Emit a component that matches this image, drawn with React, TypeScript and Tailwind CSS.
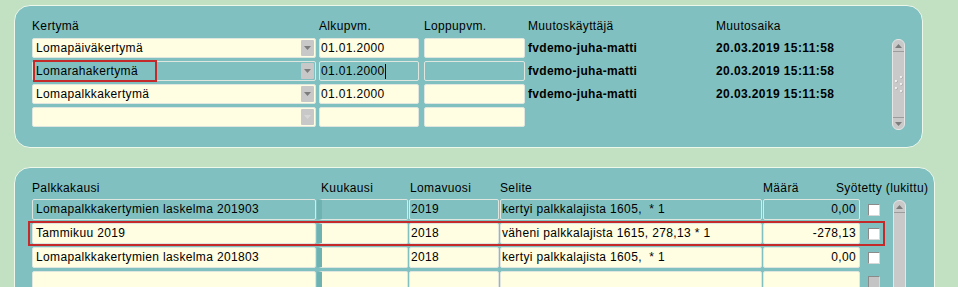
import React from "react";

const YELLOW = "bg-[#fffde2]";
const TEAL = "bg-[#80c0c0]";

type TopRow = {
  kertyma: string;
  alku: string;
  user: string;
  time: string;
  current?: boolean;
  empty?: boolean;
};

const topRows: TopRow[] = [
  { kertyma: "Lomapäiväkertymä", alku: "01.01.2000", user: "fvdemo-juha-matti", time: "20.03.2019 15:11:58" },
  { kertyma: "Lomarahakertymä", alku: "01.01.2000", user: "fvdemo-juha-matti", time: "20.03.2019 15:11:58", current: true },
  { kertyma: "Lomapalkkakertymä", alku: "01.01.2000", user: "fvdemo-juha-matti", time: "20.03.2019 15:11:58" },
  { kertyma: "", alku: "", user: "", time: "", empty: true },
];

type BottomRow = {
  kausi: string;
  vuosi: string;
  selite: string;
  maara: string;
  current?: boolean;
  marked?: boolean;
  empty?: boolean;
};

const bottomRows: BottomRow[] = [
  { kausi: "Lomapalkkakertymien laskelma 201903", vuosi: "2019", selite: "kertyi palkkalajista 1605,  * 1", maara: "0,00", current: true },
  { kausi: "Tammikuu 2019", vuosi: "2018", selite: "väheni palkkalajista 1615, 278,13 * 1", maara: "-278,13", marked: true },
  { kausi: "Lomapalkkakertymien laskelma 201803", vuosi: "2018", selite: "kertyi palkkalajista 1605,  * 1", maara: "0,00" },
  { kausi: "", vuosi: "", selite: "", maara: "", empty: true },
];

function Triangle({ up, faint }: { up?: boolean; faint?: boolean }) {
  return (
    <svg width="7" height="4" viewBox="0 0 7 4">
      <polygon points={up ? "0,4 7,4 3.5,0" : "0,0 7,0 3.5,4"} fill={faint ? "#d6d6d6" : "#7c7c7c"} />
    </svg>
  );
}

function Grip() {
  return (
    <svg width="9" height="20" viewBox="0 0 9 20">
      {[
        [7, 2],
        [2, 6],
        [7, 9],
        [2, 13],
        [7, 16],
      ].map(([x, y], i) => (
        <g key={i}>
          <circle cx={x + 0.6} cy={y + 0.6} r="1" fill="#9c9c9c" />
          <circle cx={x} cy={y} r="1" fill="#ffffff" />
        </g>
      ))}
    </svg>
  );
}

function Scrollbar({ className }: { className: string }) {
  return (
    <div className={`flex flex-col w-[13px] rounded-[6px] bg-[#c9c9c9] border border-[#e6e6e6] shrink-0 ${className}`}>
      <div className="h-[12px] flex items-center justify-center border-b border-[#9c9c9c]">
        <Triangle up />
      </div>
      <div className="flex-1 flex items-center justify-center">
        <Grip />
      </div>
      <div className="h-[12px] flex items-center justify-center border-t border-[#9c9c9c]">
        <Triangle />
      </div>
    </div>
  );
}

function CheckBox({ disabled }: { disabled?: boolean }) {
  return (
    <div
      className={`w-[12px] h-[12px] border border-t-[#8a8a8a] border-l-[#8a8a8a] border-r-[#d8d8d8] border-b-[#d8d8d8] ${
        disabled ? "bg-[#c4c4c4]" : "bg-white"
      }`}
    />
  );
}

export default function App() {
  return (
    <div className="w-[958px] h-[287px] overflow-hidden bg-[#c2e0c2] font-['Liberation_Sans',Arial,sans-serif] text-[12px] tracking-[0.35px] text-black">
      {/* Top panel: Kertymä */}
      <div className={`ml-[14px] mt-[5px] w-[909px] h-[143px] rounded-[16px] border border-[#eef8ea] ${TEAL} flex pl-[17px]`}>
        <div className="w-[860px] shrink-0 pt-[13px]">
          <div className="flex h-[15px] leading-[15px] whitespace-nowrap">
            <div className="w-[287px] shrink-0">Kertymä</div>
            <div className="w-[105px] shrink-0">Alkupvm.</div>
            <div className="w-[104px] shrink-0">Loppupvm.</div>
            <div className="w-[188px] shrink-0">Muutoskäyttäjä</div>
            <div>Muutosaika</div>
          </div>
          <div className="mt-[4px] flex flex-col gap-[3px]">
            {topRows.map((r, i) => {
              const bg = r.current ? TEAL : YELLOW;
              return (
                <div key={i} className="flex h-[20px] leading-[18px] whitespace-nowrap">
                  <div className={`relative w-[284px] shrink-0 flex rounded-[2px] border border-[#dfe6df] ${bg}`}>
                    <div className="flex-1 pl-[3px]">{r.kertyma}</div>
                    <div className="w-[13px] my-[1px] mr-[1px] flex items-center justify-center bg-[#c8c8c8] rounded-[1px]">
                      <Triangle faint={r.empty} />
                    </div>
                    {r.current && (
                      <div className="absolute left-0 -top-[2px] -bottom-[2px] w-[124px] border-2 border-[#c42a2a]" />
                    )}
                  </div>
                  <div className={`ml-[3px] w-[100px] shrink-0 rounded-[2px] border border-[#dfe6df] pl-[1px] ${bg} flex items-center`}>
                    <span className="leading-[18px]">{r.alku}</span>
                    {r.current && <span className="w-[1px] h-[15px] bg-black" />}
                  </div>
                  <div className={`ml-[5px] w-[101px] shrink-0 rounded-[2px] border border-[#dfe6df] ${bg}`} />
                  <div className="ml-[3px] w-[188px] shrink-0 font-bold leading-[20px] tracking-[0.3px]">{r.user}</div>
                  <div className="font-bold leading-[20px] tracking-[0.4px]">{r.time}</div>
                </div>
              );
            })}
          </div>
        </div>
        <Scrollbar className="mt-[33px] h-[91px]" />
      </div>

      {/* Bottom panel: Palkkakausi */}
      <div className={`ml-[14px] mt-[19px] w-[921px] h-[150px] rounded-t-[16px] border border-[#eef8ea] ${TEAL} flex pl-[17px]`}>
        <div className="w-[861px] shrink-0 pt-[13px]">
          <div className="flex h-[15px] leading-[15px] whitespace-nowrap">
            <div className="w-[289px] shrink-0">Palkkakausi</div>
            <div className="w-[89px] shrink-0">Kuukausi</div>
            <div className="w-[90px] shrink-0">Lomavuosi</div>
            <div className="w-[263px] shrink-0">Selite</div>
            <div className="w-[73px] shrink-0">Määrä</div>
            <div className="shrink-0">Syötetty (lukittu)</div>
          </div>
          <div className="mt-[3px] flex flex-col gap-[3px]">
            {bottomRows.map((r, i) => {
              const bg = r.current ? TEAL : YELLOW;
              return (
                <div key={i} className="relative flex items-center h-[21px] leading-[19px] whitespace-pre">
                  <div className={`w-[284px] shrink-0 h-full rounded-[2px] border border-[#dfe6df] pl-[3px] ${bg}`}>{r.kausi}</div>
                  <div className={`ml-[1px] w-[91px] shrink-0 h-full rounded-[2px] border border-[#dfe6df] border-l-[5px] border-l-[#6eb2b2] ${bg}`} />
                  <div className={`ml-[1px] w-[90px] shrink-0 h-full rounded-[2px] border border-[#dfe6df] pl-[1px] ${bg}`}>{r.vuosi}</div>
                  <div className={`ml-[1px] w-[262px] shrink-0 h-full rounded-[2px] border border-[#dfe6df] pl-[1px] ${bg}`}>{r.selite}</div>
                  <div className={`ml-[1px] w-[97px] shrink-0 h-full rounded-[2px] border border-[#dfe6df] pr-[3px] text-right ${bg}`}>{r.maara}</div>
                  <div className="ml-[8px] shrink-0">
                    <CheckBox disabled={r.empty} />
                  </div>
                  {r.marked && (
                    <div className="absolute -left-[4px] -top-[2px] -bottom-[2px] w-[857px] border-2 border-[#c42a2a]" />
                  )}
                </div>
              );
            })}
          </div>
        </div>
        <Scrollbar className="mt-[32px] h-[220px]" />
      </div>
    </div>
  );
}
